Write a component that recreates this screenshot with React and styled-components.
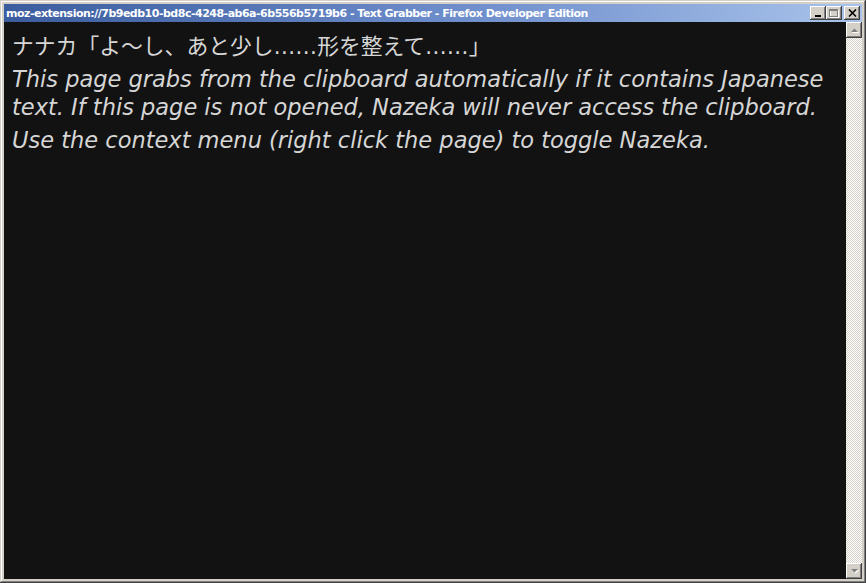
import React from 'react'
import styled, { createGlobalStyle } from 'styled-components'

const Global = createGlobalStyle`
  html, body {
    margin: 0;
    padding: 0;
    height: 100%;
    overflow: hidden;
  }
  #root {
    height: 100%;
  }
`

const Frame = styled.div`
  box-sizing: border-box;
  width: 866px;
  height: 583px;
  display: flex;
  flex-direction: column;
  background: #d4d0c8;
  padding: 4px;
  box-shadow: inset -1px -1px #404040, inset 1px 1px #d4d0c8, inset -2px -2px #808080, inset 2px 2px #ffffff;
`

const TitleBar = styled.div`
  height: 18px;
  display: flex;
  align-items: center;
  padding: 0 2px;
  background: linear-gradient(to right, #3b5c9e 0%, #6f8fcd 55%, #a9c3ea 100%);
`

const Title = styled.div`
  flex: 1;
  color: #ffffff;
  font: bold 11px "DejaVu Sans", "Liberation Sans", sans-serif;
  letter-spacing: -0.5px;
  white-space: nowrap;
  overflow: hidden;
`

const Buttons = styled.div`
  display: flex;
`

const Bevel = styled.div`
  box-sizing: border-box;
  width: ${p => p.$w || 16}px;
  height: ${p => p.$h || 14}px;
  margin-left: ${p => p.$gap || 0}px;
  background: #d4d0c8;
  display: flex;
  align-items: center;
  justify-content: center;
  box-shadow: inset -1px -1px #404040, inset 1px 1px #ffffff, inset -2px -2px #808080, inset 2px 2px #d4d0c8;
`

const Body = styled.div`
  flex: 1;
  display: flex;
  min-height: 0;
`

const Content = styled.div`
  flex: 1;
  background: #121212;
  color: #d6d6d6;
  padding: 7px 8px;
  font-family: "DejaVu Sans", "Noto Sans CJK JP", sans-serif;
`

const Grabbed = styled.div`
  font-size: 21.8px;
  line-height: 36px;
`

const Note = styled.p`
  margin: 0 0 5px;
  font-style: italic;
  font-size: 22.5px;
  line-height: 28px;
`

const Scrollbar = styled.div`
  width: 16px;
  display: flex;
  flex-direction: column;
  justify-content: space-between;
  background: repeating-conic-gradient(#ffffff 0 25%, #d4d0c8 0 50%) 0 0 / 2px 2px;
`

const Arrow = ({ down }) => (
  <svg width="9" height="6" viewBox="0 0 9 6">
    <path d={down ? 'M1 1h7L4.5 4.5z' : 'M1 5h7L4.5 1.5z'} fill="#ffffff" transform="translate(1 1)" />
    <path d={down ? 'M1 1h7L4.5 4.5z' : 'M1 5h7L4.5 1.5z'} fill="#808080" />
  </svg>
)

export default function App() {
  return (
    <>
      <Global />
      <Frame>
        <TitleBar>
          <Title>moz-extension://7b9edb10-bd8c-4248-ab6a-6b556b5719b6 - Text Grabber - Firefox Developer Edition</Title>
          <Buttons>
            <Bevel>
              <svg width="8" height="8" viewBox="0 0 8 8"><rect x="1" y="6" width="6" height="2" fill="#000" /></svg>
            </Bevel>
            <Bevel>
              <svg width="10" height="9" viewBox="0 0 10 9">
                <rect x="1.5" y="1.5" width="8" height="7" fill="none" stroke="#ffffff" />
                <rect x="0.5" y="0.5" width="8" height="7" fill="none" stroke="#808080" />
                <rect x="0" y="1" width="9" height="1" fill="#808080" />
              </svg>
            </Bevel>
            <Bevel $gap={2}>
              <svg width="9" height="8" viewBox="0 0 9 8">
                <path d="M1 0.5l7 7M8 0.5l-7 7" stroke="#000" strokeWidth="1.6" />
              </svg>
            </Bevel>
          </Buttons>
        </TitleBar>
        <Body>
          <Content>
            <Grabbed>ナナカ「よ～し、あと少し……形を整えて……」</Grabbed>
            <Note>This page grabs from the clipboard automatically if it contains Japanese text. If this page is not opened, Nazeka will never access the clipboard.</Note>
            <Note>Use the context menu (right click the page) to toggle Nazeka.</Note>
          </Content>
          <Scrollbar>
            <Bevel $h={16}><Arrow /></Bevel>
            <Bevel $h={16}><Arrow down /></Bevel>
          </Scrollbar>
        </Body>
      </Frame>
    </>
  )
}
